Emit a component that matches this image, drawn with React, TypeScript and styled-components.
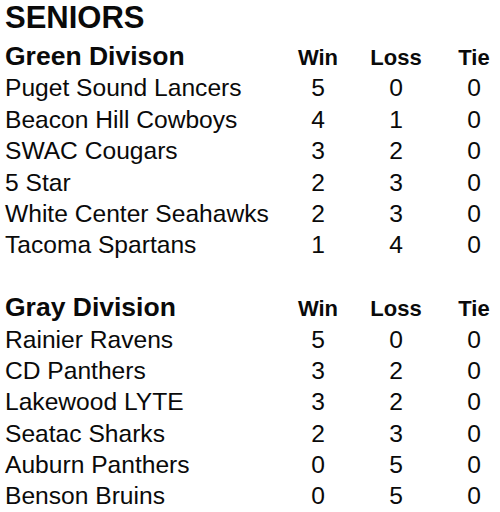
import React from 'react';
import styled, { createGlobalStyle } from 'styled-components';

type Team = { name: string; win: number; loss: number; tie: number };

const green: Team[] = [
  { name: 'Puget Sound Lancers', win: 5, loss: 0, tie: 0 },
  { name: 'Beacon Hill Cowboys', win: 4, loss: 1, tie: 0 },
  { name: 'SWAC Cougars', win: 3, loss: 2, tie: 0 },
  { name: '5 Star', win: 2, loss: 3, tie: 0 },
  { name: 'White Center Seahawks', win: 2, loss: 3, tie: 0 },
  { name: 'Tacoma Spartans', win: 1, loss: 4, tie: 0 },
];

const gray: Team[] = [
  { name: 'Rainier Ravens', win: 5, loss: 0, tie: 0 },
  { name: 'CD Panthers', win: 3, loss: 2, tie: 0 },
  { name: 'Lakewood LYTE', win: 3, loss: 2, tie: 0 },
  { name: 'Seatac Sharks', win: 2, loss: 3, tie: 0 },
  { name: 'Auburn Panthers', win: 0, loss: 5, tie: 0 },
  { name: 'Benson Bruins', win: 0, loss: 5, tie: 0 },
];

const GlobalStyle = createGlobalStyle`
  body {
    margin: 0;
    background: #fff;
    color: #0a0a0a;
    font-family: "Liberation Sans", Arial, sans-serif;
  }
`;

const Page = styled.div`
  width: 500px;
  height: 512px;
  padding: 1px 0 0 5px;
  box-sizing: border-box;
  overflow: hidden;
`;

const Title = styled.h1`
  margin: 0 0 6px;
  font-size: 31px;
  font-weight: 700;
  line-height: 34px;
`;

const Division = styled.section`
  & + & {
    margin-top: 31.4px;
  }
`;

const Row = styled.div`
  display: grid;
  grid-template-columns: 1fr 78px 78px 65px;
  align-items: baseline;
  height: 31.4px;
  line-height: 31.4px;
  font-size: 24.6px;
`;

const DivisionName = styled.h2`
  margin: 0;
  font-size: 26.5px;
  font-weight: 700;
`;

const ColHead = styled.span<{ $last?: boolean }>`
  text-align: center;
  font-size: 22px;
  font-weight: 700;
  padding-left: ${({ $last }) => ($last ? '13px' : '0')};
`;

const Name = styled.span`
  white-space: nowrap;
`;

const Num = styled.span<{ $last?: boolean }>`
  text-align: center;
  padding-left: ${({ $last }) => ($last ? '13px' : '0')};
`;

function Standings({ title, teams }: { title: string; teams: Team[] }) {
  return (
    <Division>
      <Row>
        <DivisionName>{title}</DivisionName>
        <ColHead>Win</ColHead>
        <ColHead>Loss</ColHead>
        <ColHead $last>Tie</ColHead>
      </Row>
      {teams.map((t) => (
        <Row key={t.name}>
          <Name>{t.name}</Name>
          <Num>{t.win}</Num>
          <Num>{t.loss}</Num>
          <Num $last>{t.tie}</Num>
        </Row>
      ))}
    </Division>
  );
}

export default function App() {
  return (
    <Page>
      <GlobalStyle />
      <Title>SENIORS</Title>
      <Standings title="Green Divison" teams={green} />
      <Standings title="Gray Division" teams={gray} />
    </Page>
  );
}
